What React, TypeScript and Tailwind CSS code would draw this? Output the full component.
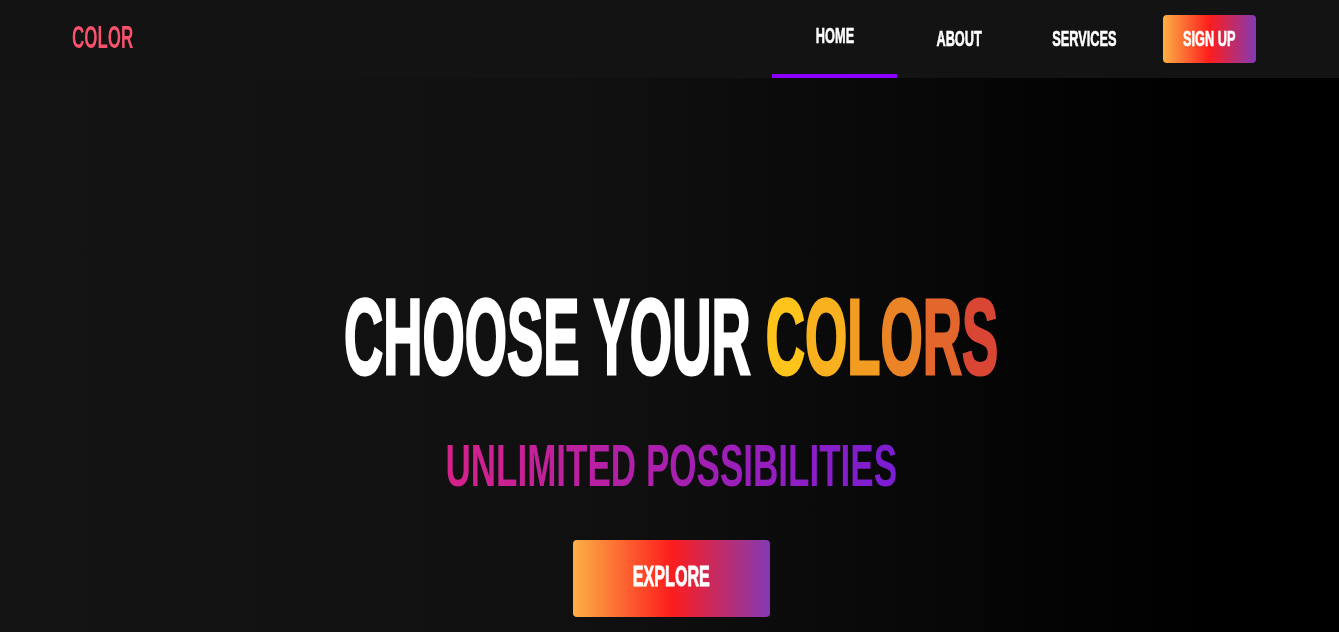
import type { ReactNode } from "react";

// Bebas-like look: Arial-width font squeezed horizontally
const font = { fontFamily: '"Liberation Sans", Arial, sans-serif' };

function Squish({ children, x, origin = "origin-center" }: { children: ReactNode; x: string; origin?: string }) {
  return <span className={`inline-block ${x} ${origin}`}>{children}</span>;
}

const links = ["HOME", "ABOUT", "SERVICES"];

// one colour per letter so the stroke can thicken it like the white part
const colors = [
  { ch: "C", cls: "text-[#ffc41c] [-webkit-text-stroke:3px_#ffc41c]" },
  { ch: "O", cls: "text-[#f9b11f] [-webkit-text-stroke:3px_#f9b11f]" },
  { ch: "L", cls: "text-[#f29c22] [-webkit-text-stroke:3px_#f29c22]" },
  { ch: "O", cls: "text-[#eb8427] [-webkit-text-stroke:3px_#eb8427]" },
  { ch: "R", cls: "text-[#e3672d] [-webkit-text-stroke:3px_#e3672d]" },
  { ch: "S", cls: "text-[#d94634] [-webkit-text-stroke:3px_#d94634]" },
];

export default function App() {
  return (
    <div style={font} className="min-h-screen bg-[linear-gradient(to_right,#141414_0%,#101010_45%,#000000_90%)] text-white">
      <header className="flex h-[78px] items-center justify-between bg-[#131313] pl-[72px] pr-[83px]">
        <a href="#" className="pb-[5px] text-[32px] leading-none font-bold text-[#f9526c]">
          <Squish x="scale-x-[0.53]" origin="origin-left">COLOR</Squish>
        </a>
        <nav className="flex h-full items-center">
          {links.map((l, i) => (
            <a
              key={l}
              href="#"
              className={`relative flex h-full w-[125px] items-center justify-center text-[22px] leading-none font-bold [-webkit-text-stroke:0.6px_white] ${
                i === 0 ? "pb-[6px]" : ""
              }`}
            >
              <Squish x="scale-x-[0.58]">{l}</Squish>
              {i === 0 && <span className="absolute bottom-0 left-0 h-[4px] w-full bg-[#8c00ff]" />}
            </a>
          ))}
          <button className="ml-[16px] flex h-[48px] w-[93px] items-center justify-center rounded-[4px] bg-[linear-gradient(to_right,#fcb045,#fd1d1d,#833ab4)] text-[22px] leading-none font-bold [-webkit-text-stroke:0.6px_white]">
            <Squish x="scale-x-[0.578]">SIGN UP</Squish>
          </button>
        </nav>
      </header>

      <main className="flex flex-col items-center pt-[206px] pl-[4px]">
        <h1 className="text-[107px] leading-none font-bold whitespace-nowrap [-webkit-text-stroke:3px_white]">
          <Squish x="scale-x-[0.508]">
            CHOOSE YOUR{" "}
            {colors.map((c, i) => (
              <span key={i} className={c.cls}>
                {c.ch}
              </span>
            ))}
          </Squish>
        </h1>
        <h2 className="mt-[46px] text-[59px] leading-none font-bold whitespace-nowrap">
          <Squish x="scale-x-[0.594]">
            <span className="bg-[linear-gradient(to_right,#d6228a,#7a1dd3)] bg-clip-text text-transparent">
              UNLIMITED POSSIBILITIES
            </span>
          </Squish>
        </h2>
        <button className="mt-[44px] flex h-[77px] w-[197px] items-center justify-center rounded-[4px] bg-[linear-gradient(to_right,#fcb045,#fd1d1d,#833ab4)] pb-[4px] text-[29px] leading-none font-bold [-webkit-text-stroke:0.8px_white]">
          <Squish x="scale-x-[0.557]">EXPLORE</Squish>
        </button>
      </main>
    </div>
  );
}
